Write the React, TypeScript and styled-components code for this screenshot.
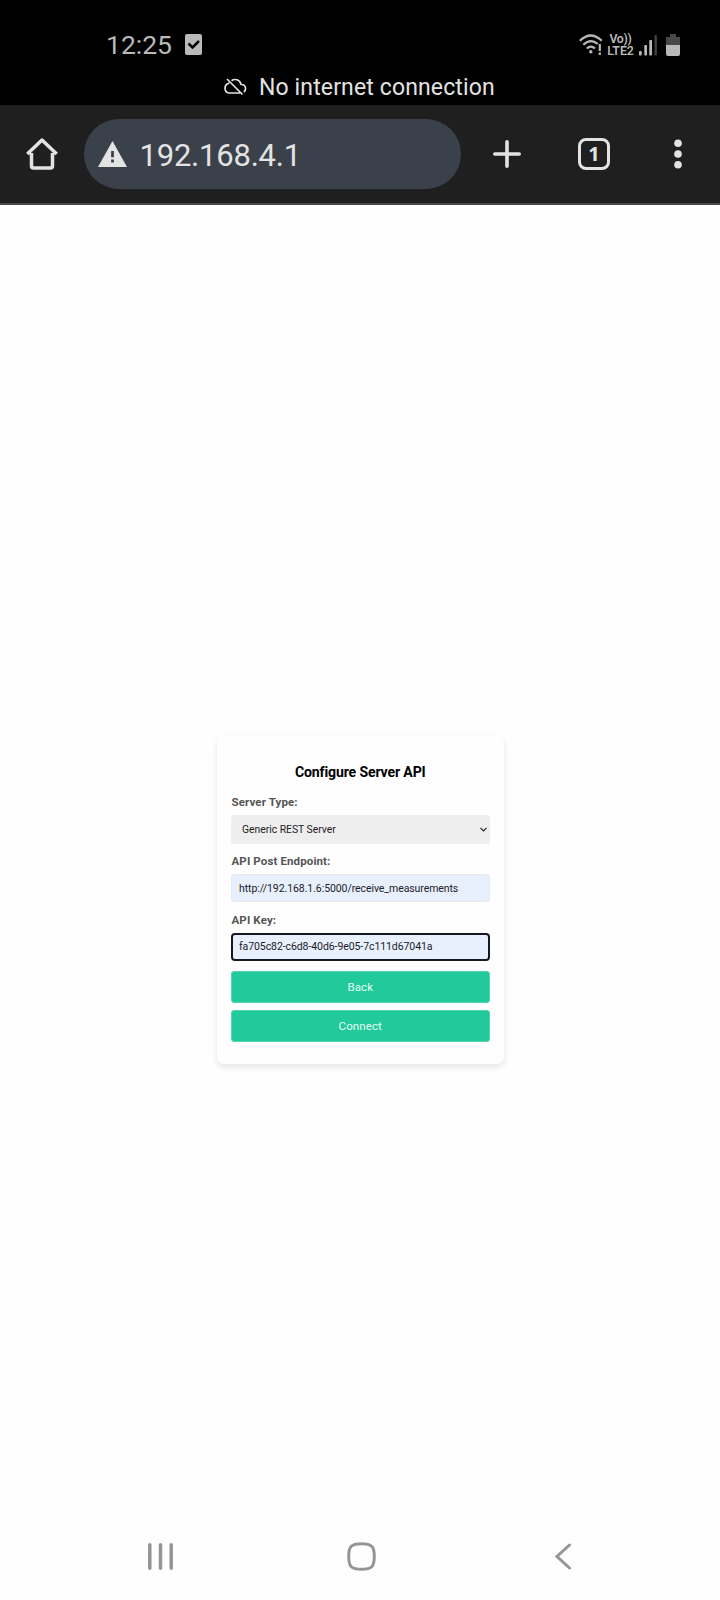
import React from 'react';
import styled, { createGlobalStyle } from 'styled-components';

const GlobalStyle = createGlobalStyle`
  * { box-sizing: border-box; }
  body { margin: 0; background: #fefefe; font-family: Roboto, sans-serif; }
  svg { flex: none; }
`;

const Phone = styled.div`
  width: 720px;
  height: 1600px;
  display: flex;
  flex-direction: column;
  overflow: hidden;
  background: #fefefe;
`;

const SystemBar = styled.header`
  height: 105px;
  flex: none;
  background: #000;
  color: #b9b9b9;
`;

const StatusRow = styled.div`
  height: 69px;
  padding: 20px 40px 0 106px;
  display: flex;
  align-items: center;
`;

const Clock = styled.span`
  width: 79px;
  font-size: 26.5px;
  line-height: 32px;
`;

const StatusIcons = styled.div`
  margin-left: auto;
  display: flex;
  align-items: center;
`;

const VoLte = styled.div`
  width: 28px;
  margin: 0 4.5px 0 3.5px;
  color: #b9b9b9;
  font-size: 12.3px;
  line-height: 12px;
  font-weight: 600;
  text-align: center;
  white-space: nowrap;
`;

const VoiceMark = styled.span`
  display: block;
  letter-spacing: -0.3px;
`;

const Notice = styled.div`
  height: 36px;
  display: flex;
  align-items: center;
  padding-left: 223.5px;
  gap: 12.5px;
  color: #e2e2e2;
  font-size: 23px;
  letter-spacing: 0.13px;
`;

const BrowserBar = styled.div`
  height: 100px;
  flex: none;
  display: flex;
  align-items: center;
  padding: 0 0 0 26px;
  background: #1f1f1f;
  border-bottom: 2px solid #4a4749;
`;

const AddressBar = styled.div`
  width: 377px;
  height: 70px;
  margin-left: 26px;
  padding-left: 14px;
  display: flex;
  align-items: center;
  gap: 12.5px;
  border-radius: 35px;
  background: #3b414b;
  color: #e3e3e3;
`;

const Address = styled.span`
  padding-top: 3px;
  font-size: 31px;
  line-height: 40px;
  letter-spacing: -0.22px;
`;

const Actions = styled.div`
  display: flex;
  align-items: center;
  margin-left: 32px;
`;

const TabCount = styled.div`
  width: 32px;
  height: 32px;
  margin: 0 64px 0 57px;
  border: 3.6px solid #e3e3e3;
  border-radius: 8px;
  color: #e3e3e3;
  font: bold 20px/26px 'Noto Sans', sans-serif;
  text-align: center;
`;

const Page = styled.main`
  height: 1288px;
  flex: none;
  padding: 531px 216px 0 217px;
`;

const Card = styled.form`
  width: 287px;
  height: 328px;
  padding: 26px 14.5px 0 14px;
  border-radius: 7px;
  background: #fefefe;
  box-shadow: 0 3px 6px rgba(0, 0, 0, 0.1);
  display: flex;
  flex-direction: column;
`;

const Title = styled.h1`
  margin: 0;
  height: 21.5px;
  color: #000;
  font-size: 14.1px;
  line-height: 21px;
  font-weight: 700;
  letter-spacing: -0.14px;
  text-align: center;
`;

const Field = styled.div`
  height: 59px;
`;

const Label = styled.label`
  display: block;
  height: 31.5px;
  padding: 11.5px 0 0 0.5px;
  color: #555;
  font-size: 11.5px;
  line-height: 14px;
  font-weight: 700;
  letter-spacing: 0.12px;
`;

const SelectBox = styled.div`
  height: 29px;
  padding: 0 3px 0 11px;
  display: flex;
  align-items: center;
  justify-content: space-between;
  border-radius: 3px;
  background: #eee;
  color: #222;
  font-size: 10.4px;
  letter-spacing: -0.03px;
`;

const TextInput = styled.input<{ $active?: boolean }>`
  display: block;
  width: 100%;
  height: 28px;
  padding: ${p => (p.$active ? '0 0 1px 6px' : '1px 0 0 7px')};
  border: ${p => (p.$active ? '2px solid #15181e' : '1px solid #e3eaf2')};
  border-radius: ${p => (p.$active ? 4 : 3)}px;
  outline: none;
  background: #e8f0fe;
  color: #202124;
  font: 10.5px/14px Roboto, sans-serif;
  letter-spacing: -0.08px;
`;

const ButtonStack = styled.div`
  display: grid;
  gap: 7px;
  margin-top: 10.5px;
`;

const Button = styled.button`
  height: 32px;
  padding: 0 0 1px;
  border: 1px solid #52d6ae;
  border-radius: 3px;
  background: #22c99a;
  color: #e4fff6;
  font: 11.5px/16px Roboto, sans-serif;
  letter-spacing: 0.1px;
`;

const NavigationBar = styled.nav`
  height: 107px;
  display: flex;
  align-items: center;
  padding: 20px 0 0 148px;
`;

const HomeSlot = styled.div`
  display: flex;
  margin: 0 179px 0 174px;
`;

const fields = [
  { label: 'API Post Endpoint:', value: 'http://192.168.1.6:5000/receive_measurements', active: false },
  { label: 'API Key:', value: 'fa705c82-c6d8-40d6-9e05-7c111d67041a', active: true },
];

function Wifi() {
  return (
    <svg width="24" height="22" viewBox="0 0 24 22" fill="none" stroke="#b9b9b9" strokeWidth="2.2">
      <path d="M.8 6.8Q11.8-3.8 22.8 6.8M4.3 10.8Q11.8 3.7 18.7 10M7.8 14.5Q11.8 10.8 16 14.5" />
      <circle cx="11.8" cy="17.7" r="1.7" fill="#b9b9b9" stroke="none" />
      <path d="M20.8 10v7M20.8 18.6v2.3" />
    </svg>
  );
}

const BatterySlot = styled.div`
  display: flex;
  margin-left: 8px;
`;

export default function App() {
  return (
    <>
      <GlobalStyle />
      <Phone>
        <SystemBar>
          <StatusRow>
            <Clock>12:25</Clock>
            <svg width="17" height="21" viewBox="0 0 17 21">
              <rect width="17" height="21" rx="2" fill="#b9b9b9" />
              <path d="m3.5 9.5 4 4L14 7" fill="none" stroke="#000" strokeWidth="2.5" />
            </svg>
            <StatusIcons>
              <Wifi />
              <VoLte><VoiceMark>Vo))</VoiceMark>LTE2</VoLte>
              <svg width="19" height="22" viewBox="0 0 19 22" fill="#b9b9b9">
                <rect y="17" width="2.7" height="4.5" rx=".8" />
                <rect x="5.3" y="11" width="2.7" height="10.5" rx=".8" />
                <rect x="10.3" y="6" width="2.7" height="15.5" rx=".8" />
                <rect x="15.5" y="1" width="2.4" height="20.5" rx=".8" fill="#414141" />
              </svg>
              <BatterySlot>
                <svg width="14" height="22" viewBox="0 0 14 22">
                  <path d="M4 0h6v3h4v8H0V3h4z" fill="#484848" />
                  <path d="M0 11h14v9q0 2-2 2H2q-2 0-2-2z" fill="#b9b9b9" />
                </svg>
              </BatterySlot>
            </StatusIcons>
          </StatusRow>
          <Notice>
            <svg width="23" height="18" viewBox="0 0 23 18" fill="none" stroke="#e2e2e2" strokeWidth="1.7">
              <path d="M5.4 5.2Q1 6 1 10.3q.2 4.7 5 4.7h10M7.5 2.8Q10 .9 13 1.8t4.2 4.7q4.2.1 4.4 4 0 2-1.7 3.5M3 1l15.5 15.5" />
            </svg>
            <span>No internet connection</span>
          </Notice>
        </SystemBar>
        <BrowserBar>
          <svg width="32" height="32" viewBox="0 0 32 32" fill="none" stroke="#e3e3e3" strokeWidth="3.5" strokeLinejoin="round">
            <path d="M1.3 16 16 2l14.7 14M5.5 15v13q0 2 2 2h17q2 0 2-2V15" />
          </svg>
          <AddressBar>
            <svg width="29" height="26" viewBox="0 0 29 26">
              <path d="M14.5 0 29 26H0z" fill="#e3e3e3" />
              <path d="M14.5 10v6.2M14.5 18.5v3" stroke="#3b414b" strokeWidth="2.8" />
            </svg>
            <Address>192.168.4.1</Address>
          </AddressBar>
          <Actions>
            <svg width="28" height="28" viewBox="0 0 28 28" stroke="#e3e3e3" strokeWidth="3.6" strokeLinecap="round">
              <path d="M1.8 14h24.4M14 1.8v24.4" />
            </svg>
            <TabCount>1</TabCount>
            <svg width="8" height="30" viewBox="0 0 8 30" fill="#e3e3e3">
              <circle cx="4" cy="4.2" r="3.8" /><circle cx="4" cy="15" r="3.8" /><circle cx="4" cy="25.8" r="3.8" />
            </svg>
          </Actions>
        </BrowserBar>
        <Page>
          <Card>
            <Title>Configure Server API</Title>
            <Field>
              <Label>Server Type:</Label>
              <SelectBox>
                <span>Generic REST Server</span>
                <svg width="7" height="5" viewBox="0 0 7 5" fill="none" stroke="#222" strokeWidth="1.2">
                  <path d="m.5.8 3 3 3-3" />
                </svg>
              </SelectBox>
            </Field>
            {fields.map(field => (
              <Field key={field.label}>
                <Label>{field.label}</Label>
                <TextInput value={field.value} $active={field.active} readOnly />
              </Field>
            ))}
            <ButtonStack>
              <Button type="button">Back</Button>
              <Button type="button">Connect</Button>
            </ButtonStack>
          </Card>
        </Page>
        <NavigationBar>
          <svg width="25" height="27" viewBox="0 0 25 27" stroke="#959595" strokeWidth="3.5" strokeLinecap="round">
            <path d="M1.8 1.8v23.4M12.5 1.8v23.4M23.2 1.8v23.4" />
          </svg>
          <HomeSlot>
            <svg width="29" height="29" viewBox="0 0 29 29" fill="none" stroke="#959595" strokeWidth="3">
              <path d="M14.5 1.7c10.2 0 12.8 2.6 12.8 12.8s-2.6 12.8-12.8 12.8S1.7 24.7 1.7 14.5 4.3 1.7 14.5 1.7z" />
            </svg>
          </HomeSlot>
          <svg width="17" height="27" viewBox="0 0 17 27" fill="none" stroke="#959595" strokeWidth="3" strokeLinecap="round">
            <path d="M14.5 2 2 13.5 14.5 25" />
          </svg>
        </NavigationBar>
      </Phone>
    </>
  );
}
